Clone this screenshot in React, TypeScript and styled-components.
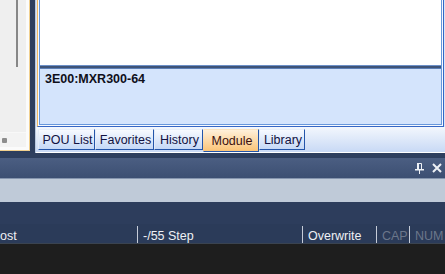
import React from 'react';
import styled, { createGlobalStyle } from 'styled-components';

const GlobalStyle = createGlobalStyle`
  html, body {
    margin: 0;
    padding: 0;
    background: #1e1e1e;
  }

  body {
    font-family: 'Liberation Sans', Arial, sans-serif;
    font-size: 12.5px;
  }
`;

const Window = styled.div`
  width: 445px;
  height: 274px;
  overflow: hidden;
  display: flex;
  flex-direction: column;
  background: #1e1e1e;
`;

const TopArea = styled.div`
  height: 153px;
  flex: none;
  display: flex;
  align-items: flex-start;
  gap: 5px;
  background: #2d3e5e;
`;

const LeftPane = styled.div`
  width: 30px;
  height: 151px;
  flex: none;
  box-sizing: border-box;
  border-right: 1px solid #f1d08e;
  border-bottom: 1px solid #f1d08e;
`;

const LeftContent = styled.div`
  height: 100%;
  box-sizing: border-box;
  display: flex;
  flex-direction: column;
  background: #efefef;
  border-right: 3px solid #fbfbfb;
  border-bottom: 3px solid #fbfbfb;
`;

const VScroll = styled.div`
  flex: 1;
  display: flex;
  padding-left: 16px;
  border-bottom: 1px solid #f8f8f8;
`;

const VThumb = styled.div`
  width: 2px;
  height: 67px;
  background: #878787;
`;

const HScroll = styled.div`
  height: 14px;
  flex: none;
  display: flex;
  align-items: center;
  padding-left: 2px;
  background: #f3f3f3;
`;

const HThumb = styled.div`
  width: 5px;
  height: 5px;
  border-radius: 1px;
  background: #8d8d8d;
`;

const RightPane = styled.div`
  flex: 1;
  height: 153px;
  display: flex;
  flex-direction: column;
  background: #dbe6f6;
  border-left: 1px solid #bac9e0;
  box-sizing: border-box;
`;

const Frame = styled.div`
  margin: 0 1px 0 1px;
  height: 127px;
  box-sizing: border-box;
  border: 1px solid #3566c6;
  border-top: none;
  border-left-color: #f0b860;
  padding: 0 1px 1px 1px;
  background: #f7faff;
  display: flex;
`;

const FrameInner = styled.div`
  flex: 1;
  display: flex;
  flex-direction: column;
  border: 1px solid #6797dc;
  border-top: none;
`;

const Editor = styled.div`
  height: 65px;
  flex: none;
  background: #ffffff;
`;

const Splitter = styled.div`
  height: 4px;
  flex: none;
  box-sizing: border-box;
  background: #3e5478;
  border-top: 1px solid #6c90c8;
  border-bottom: 1px solid #5a7eb6;
`;

const InfoArea = styled.div`
  flex: 1;
  background: #d4e4fc;
  padding: 3px 5px;
  font-weight: bold;
  color: #0f0f1a;
  line-height: 14px;
`;

const TabStrip = styled.div`
  flex: 1;
  display: flex;
  align-items: flex-start;
  padding: 2px 0 0 2px;
  background: linear-gradient(#f3f7fd, #c8d9f5);
  border-bottom: 1px solid #ffffff;
`;

const Tab = styled.div<{ $active?: boolean; $width: number }>`
  width: ${p => p.$width}px;
  height: ${p => (p.$active ? 23 : 21)}px;
  flex: none;
  box-sizing: border-box;
  display: flex;
  align-items: center;
  justify-content: center;
  padding-left: 2px;
  color: ${p => (p.$active ? '#3a0f0f' : '#121242')};
  background: ${p =>
    p.$active
      ? 'linear-gradient(#fff0da, #fbc478)'
      : 'linear-gradient(#f7faff, #c5d8f6)'};
  border-left: 1px solid ${p => (p.$active ? 'transparent' : '#e2ebf9')};
  border-right: 1px solid #2355aa;
  border-bottom: 1px solid #2355aa;
  border-top: 1px solid ${p => (p.$active ? '#fbe3bf' : '#e8effa')};
  white-space: nowrap;
`;

const DockHeader = styled.div`
  height: 26px;
  flex: none;
  box-sizing: border-box;
  display: flex;
  align-items: center;
  justify-content: flex-end;
  gap: 8px;
  padding: 5px 3px 0 0;
  background: linear-gradient(#2e3f5f 0, #2e3f5f 5px, #4b5e82 5px, #3c4f72 100%);
  border-bottom: 1px solid #8595ae;
`;

const HeaderIcon = styled.svg`
  display: block;
  color: #eef1f6;
`;

const LightBand = styled.div`
  height: 23px;
  flex: none;
  background: #bfcad8;
`;

const NavyBand = styled.div`
  height: 22px;
  flex: none;
  background: #2d3d5c;
`;

const StatusBar = styled.div`
  height: 20px;
  flex: none;
  box-sizing: border-box;
  display: flex;
  align-items: flex-start;
  padding-top: 2px;
  background: #2b3b59;
  color: #eef0f4;
  border-bottom: 1px solid #3a4350;
`;

const StatusCell = styled.div<{ $width?: number; $dim?: boolean; $sep?: boolean }>`
  width: ${p => (p.$width ? `${p.$width}px` : 'auto')};
  flex: ${p => (p.$width ? 'none' : '1')};
  height: 17px;
  box-sizing: border-box;
  display: flex;
  align-items: center;
  padding: 2px 0 0 ${p => (p.$sep ? 5 : 0)}px;
  border-left: ${p => (p.$sep ? '1px solid #c6ccd8' : 'none')};
  color: ${p => (p.$dim ? '#6b778b' : '#eef0f4')};
  white-space: nowrap;
  overflow: hidden;
`;

const tabs = [
  { name: 'POU List', width: 57 },
  { name: 'Favorites', width: 59 },
  { name: 'History', width: 49 },
  { name: 'Module', width: 56 },
  { name: 'Library', width: 46 }
];

function PinIcon () {
  return (
    <HeaderIcon width='9' height='11' viewBox='0 0 9 11'>
      <path d='M2.5 0.5h4v6h-4z' fill='none' stroke='currentColor' strokeWidth='1' />
      <rect x='2' y='0' width='2' height='7' fill='currentColor' />
      <rect x='0' y='6' width='9' height='1.5' fill='currentColor' />
      <rect x='4' y='7' width='1' height='4' fill='currentColor' />
    </HeaderIcon>
  );
}

function CloseIcon () {
  return (
    <HeaderIcon width='10' height='10' viewBox='0 0 10 10'>
      <path d='M1 1L9 9M9 1L1 9' stroke='currentColor' strokeWidth='2' />
    </HeaderIcon>
  );
}

export default function App (): React.ReactElement {
  return (
    <Window>
      <GlobalStyle />
      <TopArea>
        <LeftPane>
          <LeftContent>
            <VScroll>
              <VThumb />
            </VScroll>
            <HScroll>
              <HThumb />
            </HScroll>
          </LeftContent>
        </LeftPane>
        <RightPane>
          <Frame>
            <FrameInner>
              <Editor />
              <Splitter />
              <InfoArea>3E00:MXR300-64</InfoArea>
            </FrameInner>
          </Frame>
          <TabStrip>
            {tabs.map(({ name, width }) => (
              <Tab key={name} $active={name === 'Module'} $width={width}>{name}</Tab>
            ))}
          </TabStrip>
        </RightPane>
      </TopArea>
      <DockHeader>
        <PinIcon />
        <CloseIcon />
      </DockHeader>
      <LightBand />
      <NavyBand />
      <StatusBar>
        <StatusCell $width={137}>ost</StatusCell>
        <StatusCell $width={165} $sep>-/55 Step</StatusCell>
        <StatusCell $width={74} $sep>Overwrite</StatusCell>
        <StatusCell $width={33} $sep $dim>CAP</StatusCell>
        <StatusCell $sep $dim>NUM</StatusCell>
      </StatusBar>
    </Window>
  );
}
